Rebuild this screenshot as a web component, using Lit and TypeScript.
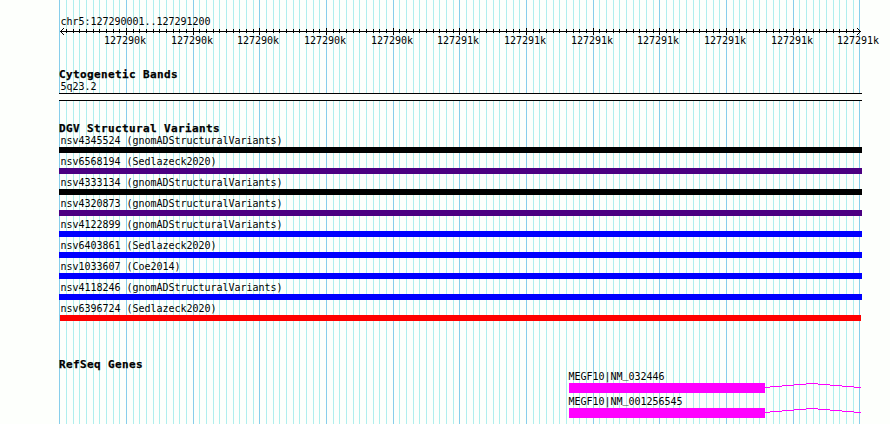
import { css, html, LitElement, svg } from "lit";
import { customElement, property } from "lit/decorators.js";

interface Variant {
  name: string;
  color: string;
  inset?: boolean;
}

const VARIANTS: Variant[] = [
  { name: "nsv4345524 (gnomADStructuralVariants)", color: "#000000" },
  { name: "nsv6568194 (Sedlazeck2020)", color: "#4b0082" },
  { name: "nsv4333134 (gnomADStructuralVariants)", color: "#000000" },
  { name: "nsv4320873 (gnomADStructuralVariants)", color: "#4b0082" },
  { name: "nsv4122899 (gnomADStructuralVariants)", color: "#0000ff" },
  { name: "nsv6403861 (Sedlazeck2020)", color: "#0000ff" },
  { name: "nsv1033607 (Coe2014)", color: "#0000ff" },
  { name: "nsv4118246 (gnomADStructuralVariants)", color: "#0000ff" },
  { name: "nsv6396724 (Sedlazeck2020)", color: "#ff0000", inset: true },
];

const GENES = ["MEGF10|NM_032446", "MEGF10|NM_001256545"];

// one tick every 10 bases, a major one every 100
const TICKS = Array.from({ length: 121 }, (_, i) => ({
  x: Math.floor(59.7 + (i * 20) / 3),
  major: i % 10 === 0,
  index: i,
}));

@customElement("grid-lines")
export class GridLinesElement extends LitElement {
  render() {
    return html`
      <svg width="890" height="424" shape-rendering="crispEdges">
        ${TICKS.map((t) => svg`<rect class=${t.major ? "major" : "minor"} x=${t.x} y="0" width="1" height="424" />`)}
      </svg>
    `;
  }

  static styles = css`
    :host {
      display: block;
    }
    svg {
      display: block;
    }
    .minor {
      fill: #afeeee;
    }
    .major {
      fill: #87ceeb;
    }
  `;
}

@customElement("scale-ruler")
export class ScaleRulerElement extends LitElement {
  render() {
    const ticks = TICKS.slice(1, -1);
    const labels = TICKS.filter((t) => t.major && t.index > 0);
    return html`
      <svg width="890" height="22" shape-rendering="crispEdges">
        <rect x="60" y="4" width="801" height="1" />
        ${ticks.map((t) =>
          t.major
            ? svg`<rect x=${t.x} y="1" width="1" height="7" />`
            : svg`<rect x=${t.x} y="2" width="1" height="4" />`
        )}
        <path d="M60 4h1v1h-1z M61 3h1v1h-1z M61 5h1v1h-1z M62 2h1v1h-1z M62 6h1v1h-1z M63 1h1v1h-1z M63 7h1v1h-1z" />
        <path d="M860 4h1v1h-1z M859 3h1v1h-1z M859 5h1v1h-1z M858 2h1v1h-1z M858 6h1v1h-1z M857 1h1v1h-1z M857 7h1v1h-1z" />
        ${labels.map((t) => svg`<text x=${t.x - 22} y="17">${t.index < 60 ? "127290k" : "127291k"}</text>`)}
      </svg>
    `;
  }

  static styles = css`
    :host {
      display: block;
    }
    svg {
      display: block;
    }
    text {
      font: 10px "DejaVu Sans Mono", monospace;
      letter-spacing: -0.02px;
    }
  `;
}

@customElement("gene-row")
export class GeneRowElement extends LitElement {
  @property()
  name: string = "";

  render() {
    const [prefix, accession] = this.name.split("_");
    return html`
      <div class="name">${prefix}<span class="underscore">_</span>${accession}</div>
      <div class="glyph">
        <div class="exon"></div>
        <svg width="96" height="10" shape-rendering="crispEdges">
          <path d="M0 4.5h5m0-1h12m0-1h12m0-1h12m0-1h12m0 1h12m0 1h12m0 1h12m0 1h7" />
        </svg>
      </div>
    `;
  }

  static styles = css`
    :host {
      display: block;
      height: 25px;
    }
    .name {
      height: 12px;
      line-height: 12px;
      margin-left: -0.5px;
    }
    .underscore {
      vertical-align: 2px;
      line-height: 0;
    }
    .glyph {
      display: flex;
    }
    .exon {
      width: 196px;
      height: 10px;
      background: #ff00ff;
    }
    svg {
      display: block;
    }
    path {
      fill: none;
      stroke: #ff00ff;
      stroke-width: 1;
    }
  `;
}

@customElement("app-root")
export class AppRootElement extends LitElement {
  render() {
    return html`
      <grid-lines class="grid"></grid-lines>
      <main>
        <div class="region">chr5:127290001..127291200</div>
        <scale-ruler></scale-ruler>
        <section class="cytoband">
          <h2>Cytogenetic Bands</h2>
          <div class="label">5q23.2</div>
          <div class="band"></div>
        </section>
        <section class="variants">
          <h2>DGV Structural Variants</h2>
          ${VARIANTS.map(
            (v) => html`
              <div class="label">${v.name}</div>
              <div class="bar ${v.inset ? "inset" : ""}" style="background:${v.color}"></div>
            `
          )}
        </section>
        <section class="genes">
          <h2>RefSeq Genes</h2>
          <div class="transcripts">${GENES.map((g) => html`<gene-row .name=${g}></gene-row>`)}</div>
        </section>
      </main>
    `;
  }

  static styles = css`
    :host {
      display: block;
      position: relative;
      width: 890px;
      height: 424px;
      overflow: hidden;
      background: #fdfffc;
      color: #000;
      font: 10px/12px "DejaVu Sans Mono", monospace;
      letter-spacing: -0.02px;
    }
    .grid {
      position: absolute;
      inset: 0;
    }
    main {
      position: relative;
      display: flex;
      flex-direction: column;
      padding-top: 16px;
    }
    .region {
      height: 11px;
      padding-left: 60.5px;
    }
    section {
      width: 803px;
      margin-left: 59px;
    }
    h2 {
      margin: 0;
      height: 12px;
      font-size: 11px;
      line-height: 12px;
      font-weight: bold;
      letter-spacing: 0.378px;
      -webkit-text-stroke: 0.25px #000;
    }
    .label {
      height: 12px;
      padding-left: 1.5px;
    }
    .cytoband {
      margin-top: 20px;
    }
    .band {
      box-sizing: border-box;
      height: 8px;
      border: 1px solid #000;
      border-width: 1px 0;
      background: #fdfffc;
    }
    .variants {
      margin-top: 22px;
    }
    .bar {
      height: 6px;
      margin-bottom: 3px;
    }
    .inset {
      margin-left: 1px;
      margin-right: 1px;
    }
    .genes {
      margin-top: 35px;
    }
    .transcripts {
      padding-left: 510px;
    }
  `;
}
